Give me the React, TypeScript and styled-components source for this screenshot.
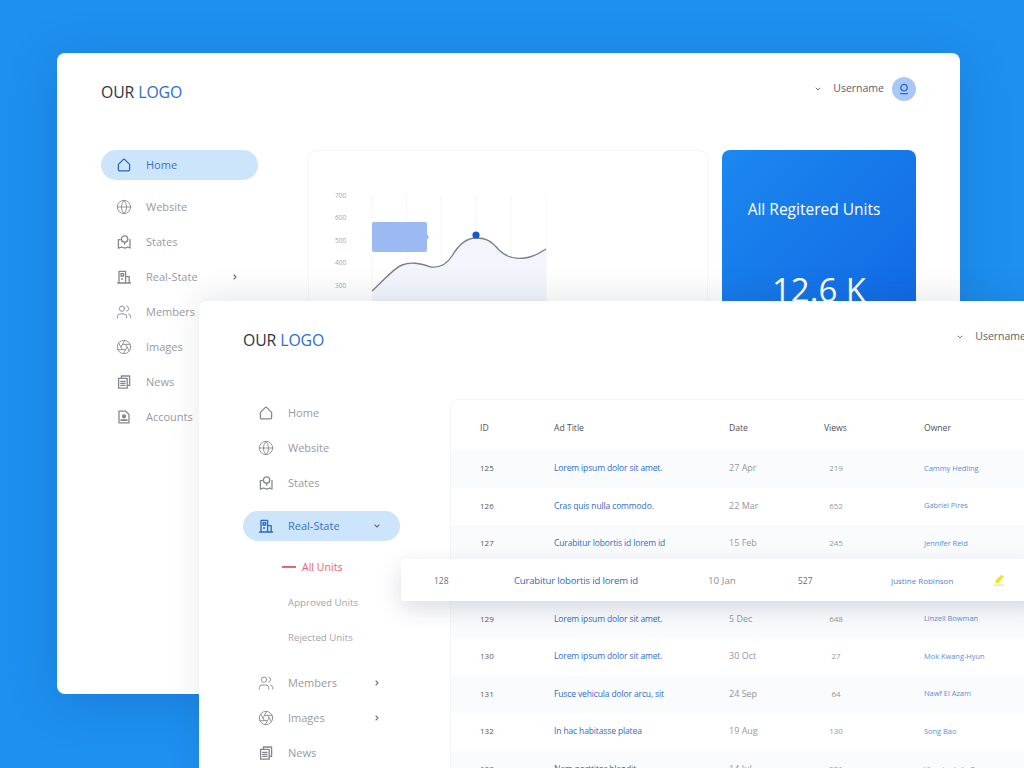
import React, { FC } from 'react';
import styled, { createGlobalStyle } from 'styled-components';
import { ChevronDown, ChevronRight, Globe, Users, Aperture } from 'lucide-react';

const GlobalStyle = createGlobalStyle`
  html, body {
    margin: 0;
    padding: 0;
    background: #1e90f0;
  }
  * {
    box-sizing: border-box;
  }
`;

const Stage = styled.div`
  position: relative;
  width: 1024px;
  height: 768px;
  overflow: hidden;
  background: #1e90f0;
  font-family: 'Open Sans', 'Noto Sans', sans-serif;
`;

const Window = styled.div<{ $left: number; $top: number }>`
  position: absolute;
  left: ${(p) => p.$left}px;
  top: ${(p) => p.$top}px;
  width: 903px;
  height: 641px;
  padding: 0 44px;
  background: #fff;
  border-radius: 8px;
  box-shadow: 0 8px 50px rgba(12, 60, 130, 0.22);
`;

const FrontWindow = styled(Window)`
  box-shadow: 0 -6px 30px rgba(30, 40, 70, 0.1);
`;

const Header = styled.header`
  display: flex;
  justify-content: space-between;
  align-items: flex-start;
  height: 78px;
  padding-top: 24px;
`;

const Logo = styled.div`
  height: 30px;
  line-height: 30px;
  font-size: 15.8px;
  color: #30343e;
  letter-spacing: -0.1px;
  span {
    color: #2c6dd2;
  }
`;

const User = styled.div`
  display: flex;
  align-items: center;
  height: 24px;
  font-size: 10.5px;
  color: #5d6068;
  svg.chev {
    color: #777b84;
    margin-right: 11px;
  }
`;

const UserName = styled.span`
  padding-bottom: 2px;
`;

const Avatar = styled.div`
  display: flex;
  align-items: center;
  justify-content: center;
  width: 24px;
  height: 24px;
  margin-left: 8px;
  border-radius: 50%;
  background: #a9c8f4;
  color: #2c6dd2;
`;

const Body = styled.div`
  display: flex;
  margin-top: 19px;
`;

const Nav = styled.nav`
  flex: 0 0 157px;
  margin-right: 50px;
`;

const NavItem = styled.div<{ $active?: boolean }>`
  display: flex;
  align-items: center;
  height: 30px;
  margin-top: ${(p) => (p.$active ? 13 : 0)}px;
  margin-bottom: ${(p) => (p.$active ? 12 : 5)}px;
  padding-left: 15px;
  border-radius: 15px;
  font-size: 11px;
  background: ${(p) => (p.$active ? '#cde5fa' : 'transparent')};
  color: ${(p) => (p.$active ? '#3a72c6' : '#989aa2')};
  &:first-child {
    margin-top: 0;
  }
  & > svg:first-child {
    flex: 0 0 16px;
    color: ${(p) => (p.$active ? '#2a66c4' : '#85878e')};
  }
`;

const NavLabel = styled.span`
  flex: 0 0 85px;
  margin-left: 14px;
  padding-bottom: 2px;
`;

const Chevron = styled.span`
  display: flex;
  color: #6f7279;
`;

const SubNav = styled.div`
  margin: -3px 0 13px;
  padding-left: 45px;
`;

const SubItem = styled.div<{ $current?: boolean }>`
  display: flex;
  align-items: center;
  height: 35px;
  padding-bottom: 1px;
  font-size: ${(p) => (p.$current ? 10.6 : 9.7)}px;
  color: ${(p) => (p.$current ? '#e9656f' : '#a2a4ab')};
  &::before {
    content: '';
    display: ${(p) => (p.$current ? 'block' : 'none')};
    width: 14px;
    height: 2px;
    margin: 0 6px 0 -6px;
    background: #e9656f;
  }
`;

const Cards = styled.div`
  display: flex;
  gap: 14px;
`;

const ChartCard = styled.div`
  flex: 0 0 400px;
  height: 420px;
  border: 1px solid #f4f5f8;
  border-radius: 8px;
`;

const UnitsCard = styled.div`
  flex: 0 0 194px;
  height: 420px;
  padding-top: 47px;
  border-radius: 8px;
  background: linear-gradient(135deg, #1b88ef 0%, #0f62e2 70%, #0b52d8 100%);
  color: #fff;
  text-align: center;
`;

const UnitsTitle = styled.div`
  padding-right: 10px;
  font-size: 15.5px;
  line-height: 24px;
`;

const UnitsValue = styled.div`
  margin-top: 46px;
  font-size: 33px;
  line-height: 46px;
`;

const TableCard = styled.div`
  flex: 0 0 640px;
  margin-top: 1px;
  border: 1px solid #f4f5f8;
  border-radius: 8px;
`;

const Row = styled.div<{ $head?: boolean; $tint?: boolean }>`
  display: grid;
  grid-template-columns: 74px 175px 95px 100px 1fr;
  align-items: center;
  height: ${(p) => (p.$head ? '50px' : '37.6px')};
  padding: ${(p) => (p.$head ? '6px 0 0 29px' : '0 0 2px 29px')};
  font-size: 9px;
  background: ${(p) => (p.$tint ? '#f9fbfd' : 'transparent')};
`;

const HeadCell = styled.div`
  font-size: 8.6px;
  color: #4d5057;
`;

const IdCell = styled.div`
  font-size: 8px;
  color: #55585f;
`;

const TitleCell = styled.div`
  font-size: 8.5px;
  letter-spacing: -0.13px;
  color: #2f6cc8;
  white-space: nowrap;
`;

const DateCell = styled.div`
  color: #95979e;
`;

const ViewsCell = styled.div`
  width: 24px;
  font-size: 8px;
  text-align: center;
  color: #96989f;
`;

const OwnerCell = styled.div`
  font-size: 7.5px;
  letter-spacing: -0.05px;
  color: #5b8fd8;
  white-space: nowrap;
`;

const FloatingRow = styled.div`
  position: absolute;
  left: 202px;
  top: 258px;
  width: 640px;
  height: 42px;
  display: grid;
  grid-template-columns: 80px 194px 90px 93px 102px 1fr;
  align-items: center;
  padding-left: 33px;
  background: #fff;
  border-radius: 4px;
  box-shadow: 0 8px 22px rgba(35, 45, 80, 0.16);
  font-size: 8.5px;
  color: #6b6e75;
`;

const FloatingTitle = styled.div`
  font-size: 9.5px;
  letter-spacing: -0.15px;
  color: #2a68c8;
`;

const FloatingDate = styled.div`
  font-size: 9.8px;
  color: #8d8f96;
`;

const FloatingOwner = styled.div`
  font-size: 8px;
  color: #4f84d2;
  white-space: nowrap;
`;

const stroke = { fill: 'none', stroke: 'currentColor', strokeWidth: 1.3, strokeLinecap: 'round', strokeLinejoin: 'round' } as const;

const HomeIcon = () => (
  <svg width="16" height="16" viewBox="0 0 16 16" {...stroke}>
    <path d="M2.4 7.4 7.2 2.6c.5-.5 1.1-.5 1.6 0l4.8 4.8v5.2c0 .7-.5 1.2-1.2 1.2H3.6c-.7 0-1.2-.5-1.2-1.2z" />
  </svg>
);

const StatesIcon = () => (
  <svg width="16" height="16" viewBox="0 0 16 16" {...stroke}>
    <circle cx="8.6" cy="5" r="3.2" />
    <path d="M8.6 8.2 8.6 10.2" />
    <path d="M4.2 5.6H2.4v8.6l3.2-1.2 3.2 1.2 3-1.2 2.2 1V5.4" />
  </svg>
);

const BuildingIcon = () => (
  <svg width="16" height="16" viewBox="0 0 16 16" {...stroke}>
    <path d="M3 14V2.4h6.6V14M1.6 14h13M9.6 7.6h3.6V14M5 4.6h2.6v2.4H5z" />
    <path d="M5.6 10h1" />
  </svg>
);

const NewsIcon = () => (
  <svg width="16" height="16" viewBox="0 0 16 16" {...stroke}>
    <path d="M5.4 4V2h8.2v9.4h-2" />
    <path d="M2.6 4.4h8.6v9.8H2.6zM4.8 7.4h4.2M4.8 9.4h4.2M4.8 11.4h4.2" />
  </svg>
);

const AccountIcon = () => (
  <svg width="16" height="16" viewBox="0 0 16 16" {...stroke}>
    <path d="M3 2.2h6.6L13 5.4v8.4H3z" />
    <circle cx="8" cy="7.4" r="1.4" fill="currentColor" />
    <path d="M5.2 11.2h5.6" strokeWidth="1.8" />
  </svg>
);

const AvatarIcon = () => (
  <svg width="12" height="12" viewBox="0 0 12 12" {...stroke}>
    <circle cx="6" cy="4.6" r="3.2" />
    <path d="M2.6 10.6h6.8" />
  </svg>
);

const PencilIcon = () => (
  <svg width="12" height="12" viewBox="0 0 11 11">
    <path d="M7.6.6 10 2.6 5 8.2 2.4 8.6 2.6 5.8z" fill="#f2e02e" />
    <path d="M.6 10.2h9.6" stroke="#f2e547" strokeWidth="1" />
  </svg>
);

const Chart = () => {
  const ticks = [
    { label: '700', y: 195 },
    { label: '600', y: 217 },
    { label: '500', y: 240 },
    { label: '400', y: 262 },
    { label: '300', y: 285 },
  ];
  const grid = [372, 406.5, 441, 476, 511, 546];
  const line = 'M372 291C385 279 394 268 402 265C412 261 421 264 431 267C441 268 447 264 452 256C459 244 466 238 476 238C488 238 493 243 499 250C507 258 518 259 525 258C534 257 541 252 546 249';
  return (
    <svg width="398" height="418" viewBox="309 151 398 418">
      {grid.map((x) => (
        <path key={x} d={`M${x} 195V400`} stroke="#f5f6f8" strokeWidth="1" />
      ))}
      {ticks.map((t) => (
        <text key={t.label} x="335" y={t.y + 2.5} fontSize="6.5" fill="#a6a7ad" fontFamily="'Open Sans', sans-serif">
          {t.label}
        </text>
      ))}
      <path d={`${line}V400H372Z`} fill="#f2f6fc" />
      <path d={line} fill="none" stroke="#7d7f86" strokeWidth="1.4" />
      <circle cx="476" cy="235" r="3.6" fill="#1257d6" />
      <path d="M374 222H425a2 2 0 0 1 2 2V234l2 3-2 3V250a2 2 0 0 1-2 2H374a2 2 0 0 1-2-2V224a2 2 0 0 1 2-2Z" fill="#9bb9f2" />
    </svg>
  );
};

type NavEntry = { label: string; icon: FC; chevron?: boolean; open?: boolean };

const baseNav: NavEntry[] = [
  { label: 'Home', icon: HomeIcon },
  { label: 'Website', icon: () => <Globe size={16} strokeWidth={1.3} /> },
  { label: 'States', icon: StatesIcon },
];
const membersIcon = () => <Users size={16} strokeWidth={1.3} />;
const imagesIcon = () => <Aperture size={16} strokeWidth={1.3} />;

type RowData = { id: number; title: string; date: string; views: number; owner: string };

const rows: RowData[] = [
  { id: 125, title: 'Lorem ipsum dolor sit amet.', date: '27 Apr', views: 219, owner: 'Cammy Hedling' },
  { id: 126, title: 'Cras quis nulla commodo.', date: '22 Mar', views: 652, owner: 'Gabriel Pires' },
  { id: 127, title: 'Curabitur lobortis id lorem id', date: '15 Feb', views: 245, owner: 'Jennifer Reid' },
  { id: 128, title: '', date: '', views: 0, owner: '' },
  { id: 129, title: 'Lorem ipsum dolor sit amet.', date: '5 Dec', views: 648, owner: 'Linzell Bowman' },
  { id: 130, title: 'Lorem ipsum dolor sit amet.', date: '30 Oct', views: 27, owner: 'Mok Kwang-Hyun' },
  { id: 131, title: 'Fusce vehicula dolor arcu, sit', date: '24 Sep', views: 64, owner: 'Nawf El Azam' },
  { id: 132, title: 'In hac habitasse platea', date: '19 Aug', views: 130, owner: 'Song Bao' },
  { id: 133, title: 'Nam porttitor blandit', date: '14 Jul', views: 521, owner: 'Vicente de la Cruz' },
];

const WindowHeader: FC = () => (
  <Header>
    <Logo>
      OUR <span>LOGO</span>
    </Logo>
    <User>
      <ChevronDown className="chev" size={8} strokeWidth={3} />
      <UserName>Username</UserName>
      <Avatar>
        <AvatarIcon />
      </Avatar>
    </User>
  </Header>
);

const NavRow: FC<{ entry: NavEntry; active?: boolean }> = ({ entry, active }) => {
  const Icon = entry.icon;
  return (
    <NavItem $active={active}>
      <Icon />
      <NavLabel>{entry.label}</NavLabel>
      {entry.chevron && (
        <Chevron>{entry.open ? <ChevronDown size={8} strokeWidth={3.5} /> : <ChevronRight size={8} strokeWidth={3.5} />}</Chevron>
      )}
    </NavItem>
  );
};

export default function App() {
  return (
    <Stage>
      <GlobalStyle />

      <Window $left={57} $top={53}>
        <WindowHeader />
        <Body>
          <Nav>
            <NavRow entry={baseNav[0]} active />
            <NavRow entry={baseNav[1]} />
            <NavRow entry={baseNav[2]} />
            <NavRow entry={{ label: 'Real-State', icon: BuildingIcon, chevron: true }} />
            <NavRow entry={{ label: 'Members', icon: membersIcon }} />
            <NavRow entry={{ label: 'Images', icon: imagesIcon }} />
            <NavRow entry={{ label: 'News', icon: NewsIcon }} />
            <NavRow entry={{ label: 'Accounts', icon: AccountIcon }} />
          </Nav>
          <Cards>
            <ChartCard>
              <Chart />
            </ChartCard>
            <UnitsCard>
              <UnitsTitle>All Regitered Units</UnitsTitle>
              <UnitsValue>12.6 K</UnitsValue>
            </UnitsCard>
          </Cards>
        </Body>
      </Window>

      <FrontWindow $left={199} $top={301}>
        <WindowHeader />
        <Body>
          <Nav>
            <NavRow entry={baseNav[0]} />
            <NavRow entry={baseNav[1]} />
            <NavRow entry={baseNav[2]} />
            <NavRow entry={{ label: 'Real-State', icon: BuildingIcon, chevron: true, open: true }} active />
            <SubNav>
              <SubItem $current>All Units</SubItem>
              <SubItem>Approved Units</SubItem>
              <SubItem>Rejected Units</SubItem>
            </SubNav>
            <NavRow entry={{ label: 'Members', icon: membersIcon, chevron: true }} />
            <NavRow entry={{ label: 'Images', icon: imagesIcon, chevron: true }} />
            <NavRow entry={{ label: 'News', icon: NewsIcon }} />
          </Nav>
          <TableCard>
            <Row $head>
              <HeadCell>ID</HeadCell>
              <HeadCell>Ad Title</HeadCell>
              <HeadCell>Date</HeadCell>
              <HeadCell>Views</HeadCell>
              <HeadCell>Owner</HeadCell>
            </Row>
            {rows.map((row, i) => (
              <Row key={row.id} $tint={i % 2 === 0}>
                {row.title && (
                  <>
                    <IdCell>{row.id}</IdCell>
                    <TitleCell>{row.title}</TitleCell>
                    <DateCell>{row.date}</DateCell>
                    <ViewsCell>{row.views}</ViewsCell>
                    <OwnerCell>{row.owner}</OwnerCell>
                  </>
                )}
              </Row>
            ))}
          </TableCard>
        </Body>
        <FloatingRow>
          <div>128</div>
          <FloatingTitle>Curabitur lobortis id lorem id</FloatingTitle>
          <FloatingDate>10 Jan</FloatingDate>
          <div>527</div>
          <FloatingOwner>Justine Robinson</FloatingOwner>
          <PencilIcon />
        </FloatingRow>
      </FrontWindow>
    </Stage>
  );
}
